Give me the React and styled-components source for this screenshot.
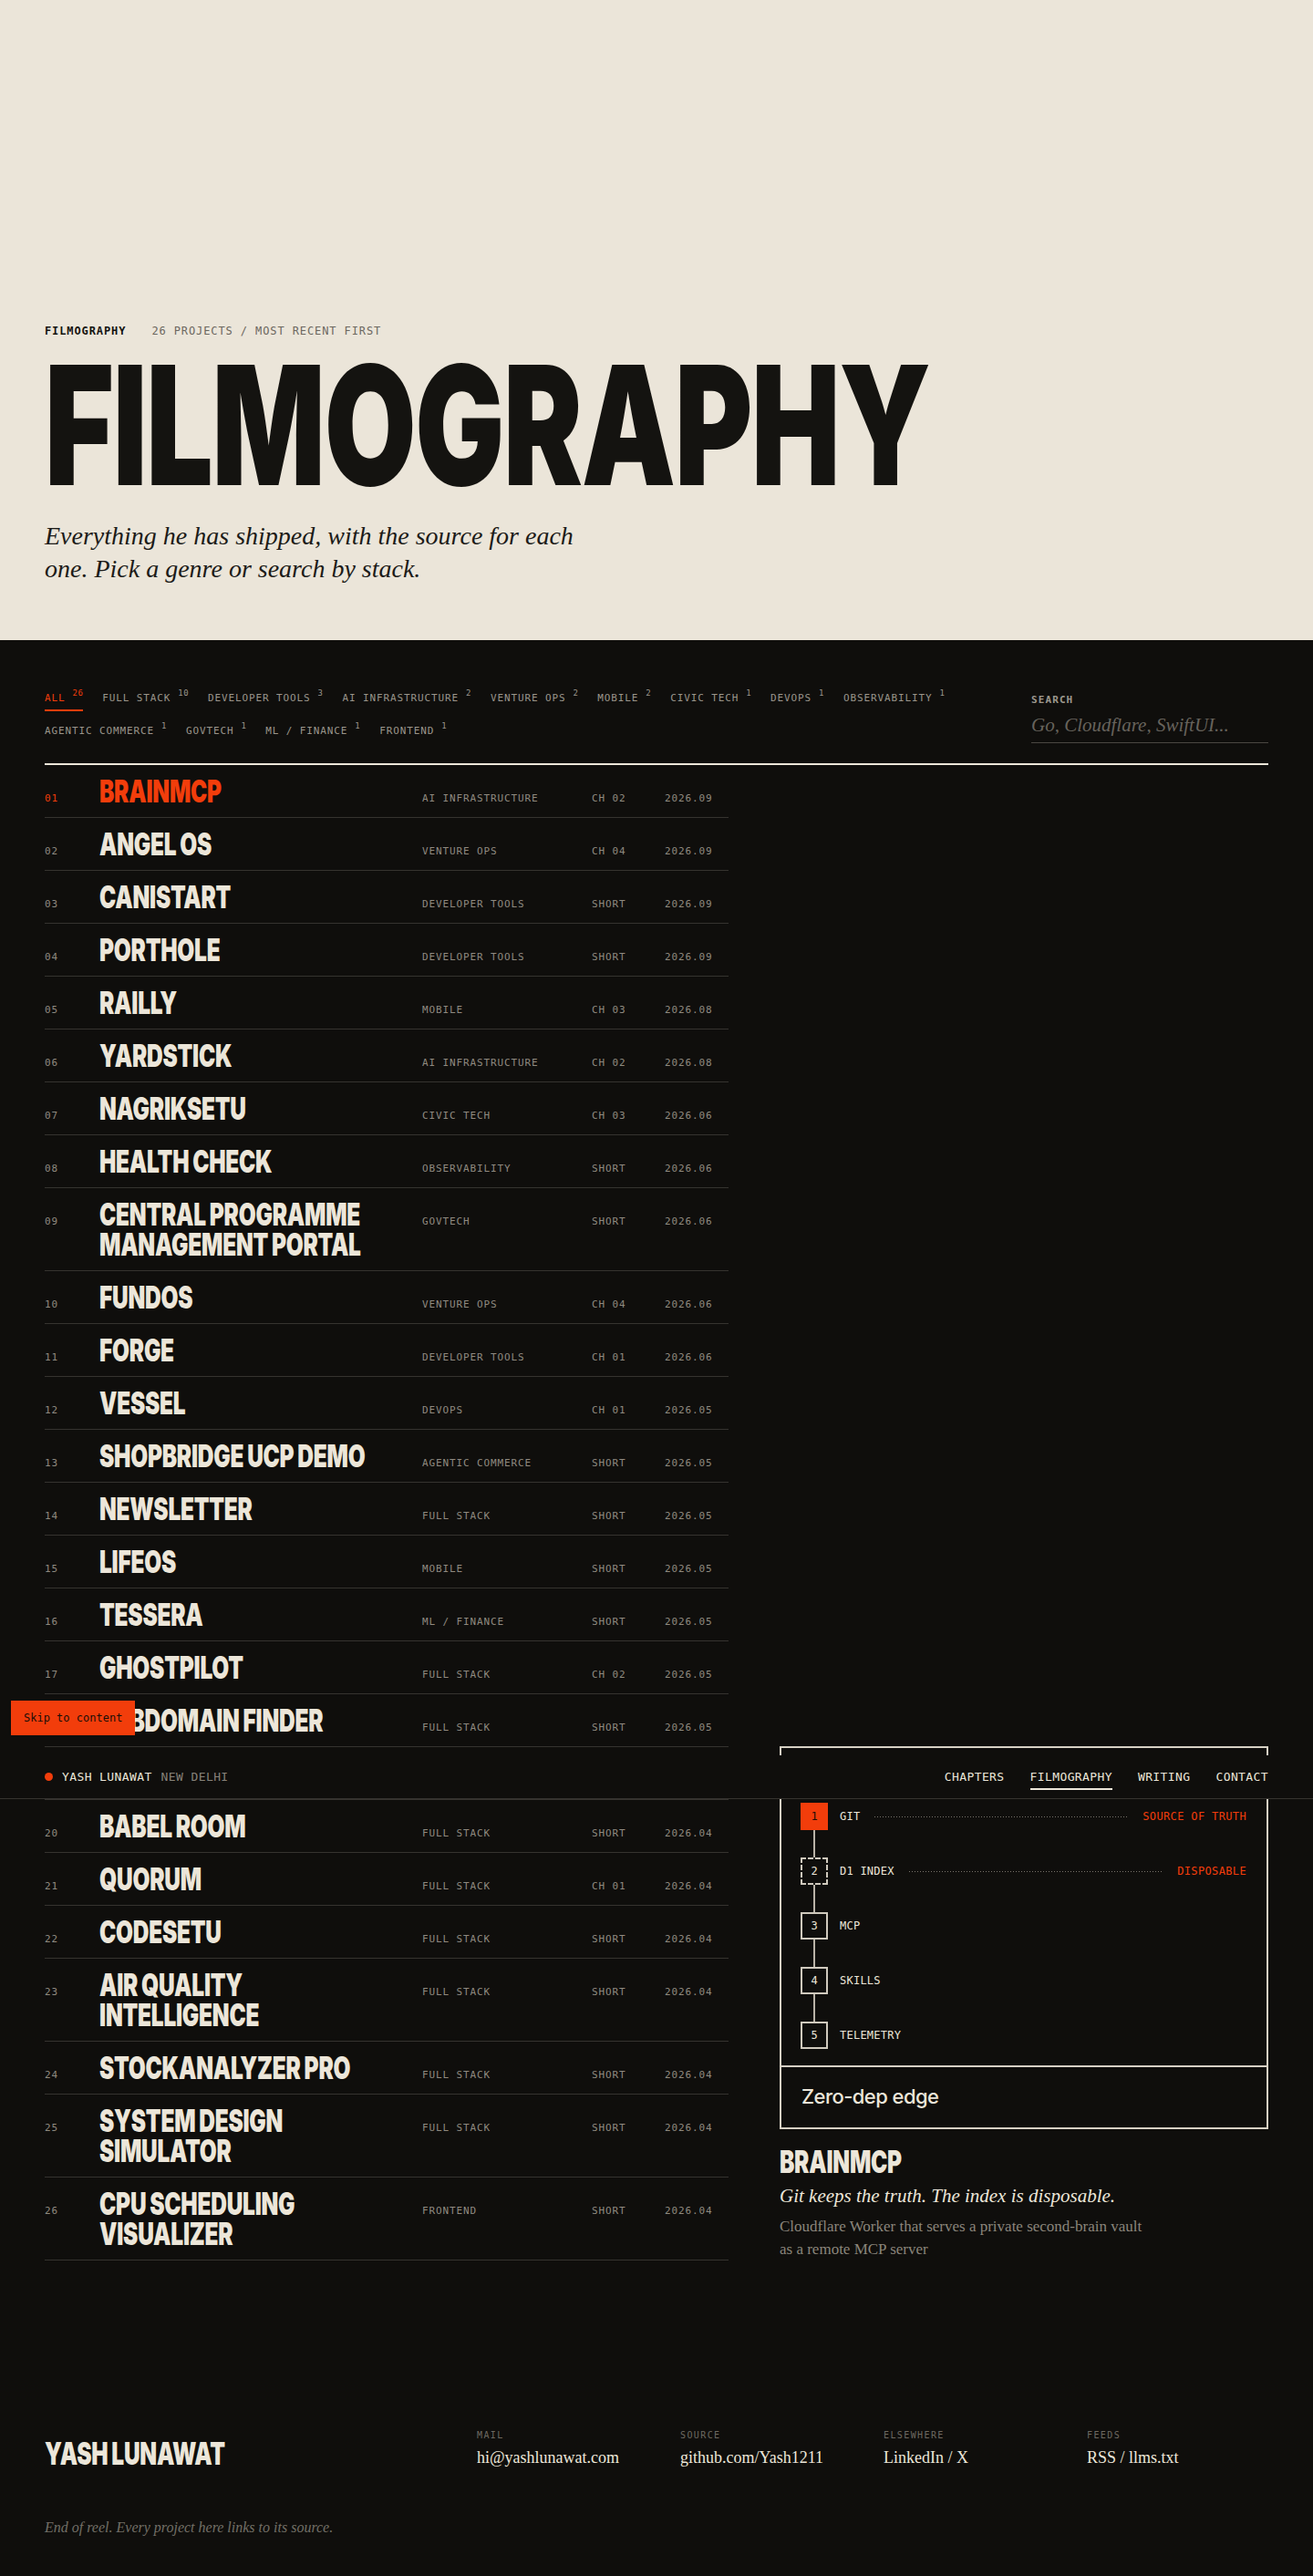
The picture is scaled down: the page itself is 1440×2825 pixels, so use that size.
import React from 'react';
import styled, { createGlobalStyle } from 'styled-components';

// Palette
const C = {
  paper: '#ebe5d9',
  ink: '#141310',
  night: '#0f0e0c',
  cream: '#ece6d9',
  muted: '#8f8a80',
  dim: '#6d6961',
  rule: '#35332f',
  frame: '#d6d0c4',
  orange: '#f23d0b',
};

const MONO = '"DejaVu Sans Mono", "Liberation Mono", monospace';
const SERIF = '"Liberation Serif", "DejaVu Serif", serif';
const SANS = 'Inter, "Noto Sans", sans-serif';

const GlobalStyle = createGlobalStyle`
  * { box-sizing: border-box; }
  html, body { margin: 0; padding: 0; background: ${C.night}; }
  body { font-family: ${SANS}; -webkit-font-smoothing: antialiased; }
  a { color: inherit; text-decoration: none; }
`;

const genres = [
  { name: 'ALL', count: 26, active: true },
  { name: 'FULL STACK', count: 10 },
  { name: 'DEVELOPER TOOLS', count: 3 },
  { name: 'AI INFRASTRUCTURE', count: 2 },
  { name: 'VENTURE OPS', count: 2 },
  { name: 'MOBILE', count: 2 },
  { name: 'CIVIC TECH', count: 1 },
  { name: 'DEVOPS', count: 1 },
  { name: 'OBSERVABILITY', count: 1 },
  { name: 'AGENTIC COMMERCE', count: 1 },
  { name: 'GOVTECH', count: 1 },
  { name: 'ML / FINANCE', count: 1 },
  { name: 'FRONTEND', count: 1 },
];

const projects = [
  { n: '01', title: ['BRAINMCP'], genre: 'AI INFRASTRUCTURE', cut: 'CH 02', date: '2026.09', active: true },
  { n: '02', title: ['ANGEL OS'], genre: 'VENTURE OPS', cut: 'CH 04', date: '2026.09' },
  { n: '03', title: ['CANISTART'], genre: 'DEVELOPER TOOLS', cut: 'SHORT', date: '2026.09' },
  { n: '04', title: ['PORTHOLE'], genre: 'DEVELOPER TOOLS', cut: 'SHORT', date: '2026.09' },
  { n: '05', title: ['RAILLY'], genre: 'MOBILE', cut: 'CH 03', date: '2026.08' },
  { n: '06', title: ['YARDSTICK'], genre: 'AI INFRASTRUCTURE', cut: 'CH 02', date: '2026.08' },
  { n: '07', title: ['NAGRIKSETU'], genre: 'CIVIC TECH', cut: 'CH 03', date: '2026.06' },
  { n: '08', title: ['HEALTH CHECK'], genre: 'OBSERVABILITY', cut: 'SHORT', date: '2026.06' },
  { n: '09', title: ['CENTRAL PROGRAMME', 'MANAGEMENT PORTAL'], genre: 'GOVTECH', cut: 'SHORT', date: '2026.06' },
  { n: '10', title: ['FUNDOS'], genre: 'VENTURE OPS', cut: 'CH 04', date: '2026.06' },
  { n: '11', title: ['FORGE'], genre: 'DEVELOPER TOOLS', cut: 'CH 01', date: '2026.06' },
  { n: '12', title: ['VESSEL'], genre: 'DEVOPS', cut: 'CH 01', date: '2026.05' },
  { n: '13', title: ['SHOPBRIDGE UCP DEMO'], genre: 'AGENTIC COMMERCE', cut: 'SHORT', date: '2026.05' },
  { n: '14', title: ['NEWSLETTER'], genre: 'FULL STACK', cut: 'SHORT', date: '2026.05' },
  { n: '15', title: ['LIFEOS'], genre: 'MOBILE', cut: 'SHORT', date: '2026.05' },
  { n: '16', title: ['TESSERA'], genre: 'ML / FINANCE', cut: 'SHORT', date: '2026.05' },
  { n: '17', title: ['GHOSTPILOT'], genre: 'FULL STACK', cut: 'CH 02', date: '2026.05' },
  { n: '18', title: ['SUBDOMAIN FINDER'], genre: 'FULL STACK', cut: 'SHORT', date: '2026.05' },
  { n: '19', title: ['LINKSHELF'], genre: 'FULL STACK', cut: 'SHORT', date: '2026.04' },
  { n: '20', title: ['BABEL ROOM'], genre: 'FULL STACK', cut: 'SHORT', date: '2026.04' },
  { n: '21', title: ['QUORUM'], genre: 'FULL STACK', cut: 'CH 01', date: '2026.04' },
  { n: '22', title: ['CODESETU'], genre: 'FULL STACK', cut: 'SHORT', date: '2026.04' },
  { n: '23', title: ['AIR QUALITY', 'INTELLIGENCE'], genre: 'FULL STACK', cut: 'SHORT', date: '2026.04' },
  { n: '24', title: ['STOCKANALYZER PRO'], genre: 'FULL STACK', cut: 'SHORT', date: '2026.04' },
  { n: '25', title: ['SYSTEM DESIGN', 'SIMULATOR'], genre: 'FULL STACK', cut: 'SHORT', date: '2026.04' },
  { n: '26', title: ['CPU SCHEDULING', 'VISUALIZER'], genre: 'FRONTEND', cut: 'SHORT', date: '2026.04' },
];

const steps = [
  { n: 1, label: 'GIT', tag: 'SOURCE OF TRUTH', kind: 'solid' },
  { n: 2, label: 'D1 INDEX', tag: 'DISPOSABLE', kind: 'dashed' },
  { n: 3, label: 'MCP' },
  { n: 4, label: 'SKILLS' },
  { n: 5, label: 'TELEMETRY' },
];

const footerLinks = [
  { label: 'MAIL', value: 'hi@yashlunawat.com' },
  { label: 'SOURCE', value: 'github.com/Yash1211' },
  { label: 'ELSEWHERE', value: 'LinkedIn / X' },
  { label: 'FEEDS', value: 'RSS / llms.txt' },
];

const Page = styled.div`
  position: relative;
  min-height: 2825px;
  background: ${C.night};
`;

// Display type: heavy grotesk squeezed to a condensed cut
const Display = styled.span`
  display: block;
  height: ${(p) => (p.$lines || 1) * 33}px;
  font-family: ${SANS};
  font-weight: 900;
  font-size: 34px;
  line-height: 33px;
  letter-spacing: -0.01em;
  word-spacing: -0.03em;
  white-space: nowrap;
  color: ${(p) => (p.$active ? C.orange : C.cream)};
  transform: scaleX(0.72);
  transform-origin: left center;
`;

const DisplayLine = styled.span`
  display: block;
`;

/* ---------- hero ---------- */
const Hero = styled.header`
  background: ${C.paper};
  color: ${C.ink};
  padding: 354px 49px 60px;
`;

const Eyebrow = styled.div`
  display: flex;
  gap: 28px;
  font-family: ${MONO};
  font-size: 12px;
  line-height: 18px;
  letter-spacing: 0.075em;
`;

const EyebrowKey = styled.span`
  font-weight: 700;
  color: ${C.ink};
`;

const EyebrowNote = styled.span`
  color: #6b675f;
`;

const HeroTitle = styled.h1`
  margin: 24px 0 0;
  height: 140px;
  font-family: ${SANS};
  font-weight: 900;
  font-size: 182px;
  line-height: 140px;
  letter-spacing: -0.01em;
  color: ${C.ink};
  transform: scaleX(0.715);
  transform-origin: left center;
`;

const Lede = styled.p`
  margin: 34px 0 0;
  font-family: ${SERIF};
  font-style: italic;
  font-size: 28px;
  line-height: 36px;
  color: #1c1b18;
`;

/* ---------- filters ---------- */
const Reel = styled.section`
  padding: 56px 49px 0;
  color: ${C.cream};
`;

const FilterBar = styled.div`
  display: grid;
  grid-template-columns: minmax(0, 1fr) 260px;
  column-gap: 80px;
  padding-bottom: 21px;
  border-bottom: 2px solid ${C.cream};
`;

const Genres = styled.div`
  display: flex;
  flex-wrap: wrap;
  align-content: flex-start;
  column-gap: 21px;
  row-gap: 14px;
`;

const Genre = styled.button`
  all: unset;
  cursor: pointer;
  display: flex;
  align-items: flex-start;
  padding-bottom: 4px;
  border-bottom: 2px solid ${(p) => (p.$active ? C.orange : 'transparent')};
  font-family: ${MONO};
  font-size: 11px;
  line-height: 16px;
  letter-spacing: 0.08em;
  color: ${(p) => (p.$active ? C.orange : '#9a958b')};
`;

const Count = styled.sup`
  margin-left: 8px;
  font-size: 9px;
  line-height: 10px;
  letter-spacing: 0.05em;
  vertical-align: top;
  position: relative;
  top: -3px;
`;

const Search = styled.div`
  display: flex;
  flex-direction: column;
  padding-top: 2px;
`;

const SearchLabel = styled.label`
  font-family: ${MONO};
  font-size: 11px;
  font-weight: 700;
  line-height: 16px;
  letter-spacing: 0.1em;
  color: #9d988e;
`;

const SearchInput = styled.input`
  margin-top: 5px;
  height: 34px;
  padding: 0 0 4px;
  border: 0;
  border-bottom: 1px solid #4a4741;
  background: transparent;
  outline: none;
  font-family: ${SERIF};
  font-style: italic;
  font-size: 21px;
  color: ${C.cream};
  &::placeholder {
    color: #67635c;
  }
`;

/* ---------- list + aside ---------- */
const Stage = styled.div`
  display: grid;
  grid-template-columns: 750px minmax(0, 1fr);
  column-gap: 56px;
`;

const List = styled.ol`
  list-style: none;
  margin: 0;
  padding: 0;
`;

const Row = styled.li`
  display: grid;
  grid-template-columns: 60px minmax(0, 1fr) 186px 80px 70px;
  align-items: start;
  padding: 12px 0;
  border-bottom: 1px solid ${C.rule};
`;

const Meta = styled.span`
  display: block;
  padding-top: 17px;
  font-family: ${MONO};
  font-size: 11px;
  line-height: 16px;
  letter-spacing: 0.08em;
  color: ${(p) => (p.$active ? C.orange : C.muted)};
`;

const Aside = styled.aside`
  display: flex;
  flex-direction: column;
  justify-content: flex-end;
`;

const Panel = styled.figure`
  margin: 0;
  border: 2px solid ${C.frame};
`;

const Steps = styled.div`
  display: flex;
  flex-direction: column;
  padding: 60px 22px 18px 21px;
`;

const Step = styled.div`
  display: flex;
  align-items: center;
  height: 30px;
`;

const StepBox = styled.span`
  flex: none;
  display: grid;
  place-items: center;
  width: 30px;
  height: 30px;
  border: 2px ${(p) => (p.$kind === 'dashed' ? 'dashed' : 'solid')}
    ${(p) => (p.$lit ? C.orange : '#cfc9bd')};
  background: ${(p) => (p.$lit ? C.orange : 'transparent')};
  color: ${(p) => (p.$lit ? '#1a0e08' : C.cream)};
  font-family: ${MONO};
  font-size: 12px;
`;

const Connector = styled.span`
  display: block;
  width: 2px;
  height: 30px;
  margin-left: 14px;
  background: #b9b3a7;
`;

const StepLabel = styled.span`
  margin-left: 13px;
  font-family: ${MONO};
  font-size: 12px;
  letter-spacing: 0.02em;
  color: ${C.cream};
`;

const Leader = styled.span`
  flex: 1;
  height: 2px;
  margin: 0 16px;
  background-image: linear-gradient(to right, #77726a 1px, transparent 1px);
  background-size: 3px 1px;
  background-repeat: repeat-x;
  background-position: left center;
`;

const StepTag = styled.span`
  font-family: ${MONO};
  font-size: 12px;
  letter-spacing: 0.03em;
  color: ${C.orange};
`;

const Caption = styled.figcaption`
  border-top: 2px solid ${C.frame};
  padding: 20px 22px 22px;
  font-family: ${SANS};
  font-weight: 500;
  font-size: 22px;
  line-height: 24px;
  letter-spacing: -0.025em;
  color: ${C.cream};
`;

const DetailName = styled.h3`
  margin: 19px 0 0;
`;

const Tagline = styled.p`
  margin: 7px 0 0;
  font-family: ${SERIF};
  font-style: italic;
  font-size: 21px;
  line-height: 28px;
  color: ${C.cream};
`;

const Blurb = styled.p`
  margin: 7px 0 0;
  max-width: 412px;
  font-family: ${SERIF};
  font-size: 17px;
  line-height: 25px;
  color: #8a857b;
`;

/* ---------- footer ---------- */
const Footer = styled.footer`
  padding: 185px 49px 40px;
  color: ${C.cream};
`;

const FooterGrid = styled.div`
  display: grid;
  grid-template-columns: minmax(0, 1fr) repeat(4, 199px);
  column-gap: 24px;
  align-items: end;
`;

const FooterCol = styled.div`
  display: flex;
  flex-direction: column;
`;

const FooterLabel = styled.span`
  font-family: ${MONO};
  font-size: 10px;
  line-height: 14px;
  letter-spacing: 0.14em;
  color: ${C.dim};
`;

const FooterValue = styled.a`
  margin-top: 5px;
  font-family: ${SERIF};
  font-size: 18px;
  line-height: 24px;
  color: ${C.cream};
`;

const Credits = styled.p`
  margin: 54px 0 0;
  font-family: ${SERIF};
  font-style: italic;
  font-size: 16px;
  line-height: 22px;
  color: #726e66;
`;

/* ---------- overlays ---------- */
const SkipLink = styled.a`
  position: absolute;
  top: 1865px;
  left: 12px;
  height: 38px;
  padding: 0 14px;
  background: ${C.orange};
  color: #1a0e08;
  font-family: ${MONO};
  font-size: 12px;
  line-height: 38px;
  z-index: 3;
`;

const TopBar = styled.nav`
  position: absolute;
  top: 1925px;
  left: 0;
  right: 0;
  height: 48px;
  display: flex;
  align-items: center;
  justify-content: space-between;
  padding: 0 49px;
  background: ${C.night};
  border-bottom: 1px solid ${C.rule};
  font-family: ${MONO};
  font-size: 13px;
  line-height: 16px;
  letter-spacing: 0.03em;
  z-index: 2;
`;

const Byline = styled.div`
  display: flex;
  align-items: center;
  gap: 10px;
`;

const Dot = styled.span`
  width: 9px;
  height: 9px;
  border-radius: 50%;
  background: ${C.orange};
`;

const Name = styled.span`
  color: ${C.cream};
`;

const City = styled.span`
  color: #87827a;
`;

const NavLinks = styled.div`
  display: flex;
  gap: 28px;
`;

const NavLink = styled.a`
  padding: 6px 0 4px;
  border-bottom: 2px solid ${(p) => (p.$current ? C.cream : 'transparent')};
  color: ${C.cream};
`;

export default function App() {
  return (
    <Page>
      <GlobalStyle />

      <Hero>
        <Eyebrow>
          <EyebrowKey>FILMOGRAPHY</EyebrowKey>
          <EyebrowNote>26 PROJECTS / MOST RECENT FIRST</EyebrowNote>
        </Eyebrow>
        <HeroTitle>FILMOGRAPHY</HeroTitle>
        <Lede>
          Everything he has shipped, with the source for each
          <br />
          one. Pick a genre or search by stack.
        </Lede>
      </Hero>

      <Reel id="reel">
        <FilterBar>
          <Genres>
            {genres.map((g) => (
              <Genre key={g.name} $active={g.active}>
                {g.name}
                <Count>{g.count}</Count>
              </Genre>
            ))}
          </Genres>
          <Search>
            <SearchLabel htmlFor="stack-search">SEARCH</SearchLabel>
            <SearchInput id="stack-search" placeholder="Go, Cloudflare, SwiftUI..." />
          </Search>
        </FilterBar>

        <Stage>
          <List>
            {projects.map((p) => (
              <Row key={p.n}>
                <Meta $active={p.active}>{p.n}</Meta>
                <Display $active={p.active} $lines={p.title.length}>
                  {p.title.map((line) => (
                    <DisplayLine key={line}>{line}</DisplayLine>
                  ))}
                </Display>
                <Meta>{p.genre}</Meta>
                <Meta>{p.cut}</Meta>
                <Meta>{p.date}</Meta>
              </Row>
            ))}
          </List>

          <Aside>
            <Panel>
              <Steps>
                {steps.map((s, i) => (
                  <React.Fragment key={s.n}>
                    {i > 0 && <Connector />}
                    <Step>
                      <StepBox $kind={s.kind} $lit={s.n === 1}>
                        {s.n}
                      </StepBox>
                      <StepLabel>{s.label}</StepLabel>
                      {s.tag && (
                        <>
                          <Leader />
                          <StepTag>{s.tag}</StepTag>
                        </>
                      )}
                    </Step>
                  </React.Fragment>
                ))}
              </Steps>
              <Caption>Zero-dep edge</Caption>
            </Panel>
            <DetailName>
              <Display>BRAINMCP</Display>
            </DetailName>
            <Tagline>Git keeps the truth. The index is disposable.</Tagline>
            <Blurb>
              Cloudflare Worker that serves a private second-brain vault as a
              remote MCP server
            </Blurb>
          </Aside>
        </Stage>
      </Reel>

      <Footer>
        <FooterGrid>
          <Display as="div">YASH LUNAWAT</Display>
          {footerLinks.map((l) => (
            <FooterCol key={l.label}>
              <FooterLabel>{l.label}</FooterLabel>
              <FooterValue href="#">{l.value}</FooterValue>
            </FooterCol>
          ))}
        </FooterGrid>
        <Credits>End of reel. Every project here links to its source.</Credits>
      </Footer>

      <SkipLink href="#reel">Skip to content</SkipLink>
      <TopBar>
        <Byline>
          <Dot />
          <Name>YASH LUNAWAT</Name>
          <City>NEW DELHI</City>
        </Byline>
        <NavLinks>
          <NavLink href="#">CHAPTERS</NavLink>
          <NavLink href="#" $current>
            FILMOGRAPHY
          </NavLink>
          <NavLink href="#">WRITING</NavLink>
          <NavLink href="#">CONTACT</NavLink>
        </NavLinks>
      </TopBar>
    </Page>
  );
}
